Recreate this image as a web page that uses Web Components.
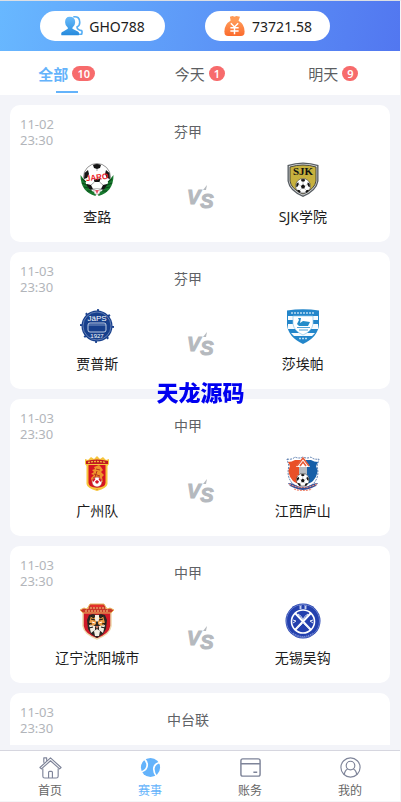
<!DOCTYPE html>
<html lang="zh-CN">
<head>
<meta charset="utf-8">
<meta name="viewport" content="width=device-width, initial-scale=1">
<title>赛事</title>
<style>
    body {
        margin: 0;
        background: #fff;
        font-family: "Noto Sans", "Noto Sans CJK SC", sans-serif;
        font-size: 14px;
        color: #1c1c1c;
    }
</style>
</head>
<body>
<match-app></match-app>

<script>
const ballPath = `
    <path d="M18 12l4 3-1.500 5h-5L14 15z" fill="#151515"/>
    <path d="M14 3q4-2 8 0l-1 3-3 1-3-1zM5.500 11l3.500-3 1 4-2 4-3 1zM30.500 11L27 8l-1 4 2 4 3 1zM8 22l4 1 2 4-3 1q-3-2-4-5zM28 22l-4 1-2 4 3 1q3-2 4-5z" fill="#151515"/>
    <path d="M18 7v5M14 15l-4-3M22 15l4-3M15.500 20L12 23M20.500 20l3.500 3M14 27h8" stroke="#777" stroke-width=".7" fill="none"/>
`;

// Club crests, all drawn on a 36x36 grid
const crests = {
    jaro: `
        <circle cx="18" cy="15" r="13.500" fill="#fff" stroke="#777" stroke-width=".8"/>
        ${ballPath}
        <path d="M10 10q8-1 16-2v8q-8 0-16 3z" fill="#fff"/>
        <path d="M1.500 13q0 17 15 21l1-3Q8 28 6 19zM34.500 13q0 17-15 21l-1-3q9-3 11-12z" fill="#187a2e"/>
        <path d="M3 17l4 3M3 21l5 2M5 25l5 1M8 29l5 0M33 17l-4 3M33 21l-5 2M31 25l-5 1M28 29l-5 0" fill="none" stroke="#0b4a1b" stroke-width="1.200"/>
        <circle cx="18" cy="29.500" r="3" fill="#fff" stroke="#999" stroke-width=".5"/>
        <path d="M16 28h4l-2 4z" fill="#e5566c"/>
        <text x="18" y="18" font-size="8" font-weight="900" fill="#ec1f2c" transform="rotate(-7 18 15)">JARO</text>`,
    sjk: `
        <path d="M2.500 3Q18-2 33.500 3v16Q32 29 18 35 4 29 2.500 19z" fill="#555b60"/>
        <path d="M3.800 4Q18-.500 32.200 4v15Q31 28 18 33.500 5 28 3.800 19z" fill="#d9dadb"/>
        <path d="M5 5Q18 1 31 5v14q-1 8-13 13Q6 27 5 19z" fill="#c7b13e" stroke="#3b3c36" stroke-width=".9"/>
        <text class="serif" x="18" y="13" font-size="11" font-weight="700" fill="#111">SJK</text>
        <g transform="translate(8.500 16) scale(.53)">
            <circle cx="18" cy="15" r="14" fill="#fff" stroke="#333"/>
            ${ballPath}
        </g>`,
    japs: `
        <circle cx="18" cy="17" r="16" fill="none" stroke="#1b428f" stroke-width="2" stroke-dasharray="2 10.500"/>
        <circle cx="18" cy="17" r="15.500" fill="#173f8c"/>
        <circle cx="18" cy="17" r="14" fill="none" stroke="#8299c6" stroke-width=".7"/>
        <rect x="9" y="14" width="18" height="9" rx="2" fill="#173f8c" stroke="#e7edf8" stroke-width=".8"/>
        <path d="M9 16h18" stroke="#a9bbdd" stroke-width=".7"/>
        <text x="18" y="12" font-size="8" fill="#fff">JäPS</text>
        <text x="18" y="29" font-size="6" fill="#fff">1927</text>`,
    salpa: `
        <path d="M2 1.500Q18-1 34 1.500v14Q33 28 18 35 3 28 2 15.500z" fill="#2386ca"/>
        <path d="M3 7h30v4H3zM3 15h30v5H3zM6 24h24l-3 3H9z" fill="#f7fbfe"/>
        <path d="M8 7h20v8q-1 7-10 11Q9 22 8 15z" fill="#fff" stroke="#8bc5e9" stroke-width=".7"/>
        <path d="M13 9h3l-1 5 3-2 7 1-2 4h-9l-2-2 2-4z" fill="#238cc9"/>
        <path d="M12 18.500h13M14 21h9" stroke="#52a4d7"/>
        <path d="M6 4h24" stroke="#b9dcf2" stroke-width="1.500" stroke-dasharray="2 1"/>
        <path d="M14 29.500h8" stroke="#b9dcf2" stroke-width="1.500" stroke-dasharray="2 1"/>`,
    guangzhou: `
        <path d="M6 3l3 1 3-3 3 2 3-3 3 3 3-2 3 3 3-1v5l-1.500 2v18Q28 32 18 35 8 32 7.500 28V10L6 8z" fill="#f6c43b"/>
        <path d="M9.500 9h17v18q-.500 4-8.500 6.500Q10 31 9.500 27z" fill="#d51322"/>
        <path d="M7 5q11-3 22 0v3H7z" fill="#bf1820"/>
        <path d="M9 6.500q9-2 18 0" stroke="#f3bd3a" stroke-width="1.300" stroke-dasharray="2 1" fill="none"/>
        <path d="M20 9l2 2 2 3-2 2 3 3-2 2 1 5-11 1-1-5 3-3-3-1 3-2-2-2 3-1-1-2z" fill="#ef952c"/>
        <path d="M17 13l4 1M15 18l6 2M14 22l7-1M18 15l-2 6" stroke="#b5341c" stroke-width="1"/>
        <circle cx="18" cy="26" r="5" fill="#fff" stroke="#a7261f" stroke-width=".6"/>
        <path d="M18 24l2 1.500-1 2h-2l-1-2zM13.500 24l2-2 1 1-2 3zM22.500 24l-2-2-1 1 2 3z" fill="#d51322"/>
        <path d="M11 31q7 3 14 0" stroke="#f6c43b" stroke-width="1.500" fill="none"/>`,
    jiangxi: `
        <path d="M2 3q5 1 8-2 4 2 8 0 4 2 8 0 3 3 8 2l-2 7q3 11-4 18-5 3-10 5-5-2-10-5Q1 21 4 10z" fill="#fff" stroke="#315c9b" stroke-width=".8" stroke-dasharray="2 1"/>
        <path d="M3 6q4 0 7-2l7 0v24q-6 0-9-3-7-8-3-15z" fill="#e95028"/>
        <path d="M33 6q-4 0-7-2l-7 0v24q6 0 9-3 7-8 3-15z" fill="#165fa8"/>
        <path d="M18 1l7 10h-3v10h-8V11h-3z" fill="#fff"/>
        <path d="M14 11h8v12h-8z" fill="#b7bbc0"/>
        <path d="M12 10l6-8 6 8M15 10l3-4 3 4" fill="none" stroke="#e65a37" stroke-width="1.500"/>
        <g transform="translate(9.500 17) scale(.46)">
            <circle cx="18" cy="15" r="14" fill="#fff" stroke="#222"/>
            ${ballPath}
        </g>
        <path d="M3 27q5 0 7 2 8 4 16 0 3-2 7-2l-2 3q-8 4-13 4-5 0-13-4z" fill="#314f9a"/>
        <path d="M4 28q14 7 28 0M9 33q9 3 18 0" fill="none" stroke="#f08d77" stroke-width="1.200" stroke-dasharray="2 1"/>`,
    liaoning: `
        <path d="M4 8h28v15q-1 8-14 13Q5 31 4 23z" fill="#cf1928" stroke="#edd8ac" stroke-width="1.500"/>
        <path d="M1 7l4-2 3 1 3-5h14l3 5 3-1 4 2-3 3H4z" fill="#c9382a" stroke="#e9b760"/>
        <path d="M8 5h20M6 8h24" stroke="#f5cb80" stroke-dasharray="2 1"/>
        <path d="M12 2h12v2H12z" fill="#e62d2a"/>
        <path d="M10 12l4-1 4 1 4-1 4 1 2 5-1 9-3 5-6 4-6-4-3-5-1-9z" fill="#292723"/>
        <path d="M12 13l5 2v6l-4 3-3-4zM24 13l-5 2v6l4 3 3-4z" fill="#ec9d46"/>
        <path d="M16 12h4v5l-2 2-2-2zM10 22l6 1v4l-4 3zM26 22l-6 1v4l4 3zM15 28l3-2 3 2-1 5h-4z" fill="#f3eee2"/>
        <path d="M12 16l4 1M24 16l-4 1M9 20l4 1M27 20l-4 1M10 25l4-1M26 25l-4-1M12 13l3 2M24 13l-3 2" stroke="#171717" stroke-width="1.200"/>
        <path d="M13 19l3 1M23 19l-3 1" stroke="#fff"/>
        <path d="M16 23h4l-2 3z" fill="#c67b64"/>`,
    wuxi: `
        <circle cx="18" cy="18" r="17.500" fill="#2340ae"/>
        <circle cx="18" cy="18" r="16.500" fill="none" stroke="#8c9edb" stroke-width=".6"/>
        <circle cx="18" cy="18.500" r="11.500" fill="#2340ae" stroke="#fff" stroke-width="1.600"/>
        <path d="M10 10l16 17M26 10L10 27" stroke="#fff" stroke-width="2"/>
        <path d="M13 11q4 2 5 6 1-4 5-6M12 25q5-3 6-6 1 3 6 6M8 17l3 1-3 2M28 17l-3 1 3 2" fill="none" stroke="#e3e9f8"/>
        <path d="M14 3h3M14 5h3M15.500 3v3M19 3h3M19 5h3M20.500 3v3" stroke="#dce3f6" stroke-width=".8" fill="none"/>
        <path d="M8 30q10 7 20 0" stroke="#a9b8e6" stroke-dasharray="1 1" fill="none"/>`
};

const navIcons = {
    home: `
        <path d="M5 7V2h3v3M1 12L12 2l11 10-1.500 1.500L12 5l-9.500 8.500z"/>
        <path d="M4 13v8q0 2 2 2h12q2 0 2-2v-8M10 23v-6q0-1 1-1h2q1 0 1 1v6"/>`,
    ball: `
        <circle cx="12" cy="12" r="10" fill="currentColor" stroke="none"/>
        <path d="M5 2.500Q10 7 8 12 6.500 16 1.500 16.500M22.500 6.500q-6 1-7 6-.500 5 3 9" stroke="#fff" stroke-width="1.800"/>`,
    card: `
        <rect x="2" y="3" width="20" height="18" rx="2" stroke-width="1.500"/>
        <path d="M2 8h20M15 17h4" stroke-width="1.500"/>`,
    user: `
        <circle cx="12" cy="12" r="10"/>
        <circle cx="12" cy="10" r="4.500"/>
        <path d="M5.500 19.500Q6 15 9 13.500M18.500 19.500Q18 15 15 13.500"/>`
};

const pillIcons = {
    user: `
        <path d="M14 2q7-1 7 6 0 4-3 5 0 3 5 4 1 1 0 4h-4" fill="none" stroke="#55aef4" stroke-width="1.800"/>
        <path d="M10 2q6 0 6 6 0 4-3 6v1l6 3q2 1 1 4H1q-1-3 2-4l5-3v-1q-3-2-3-6 0-6 5-6z" fill="url(#blue)"/>`,
    money: `
        <path d="M7 2l3-1 2 1 2-1 4 1-2 5H8z" fill="#ff9a55"/>
        <path d="M8 6h8q7 4 7 12 0 5-4 5H5q-4 0-4-5Q1 10 8 6z" fill="url(#orange)"/>
        <path d="M8 9l4 4 4-4M12 13v8M7.500 14h9M7.500 17.500h9" fill="none" stroke="#fff" stroke-width="1.600"/>`
};

const matches = [
    { day: '11-02', time: '23:30', league: '芬甲', teams: [['jaro', '查路'], ['sjk', 'SJK学院']] },
    { day: '11-03', time: '23:30', league: '芬甲', teams: [['japs', '贾普斯'], ['salpa', '莎埃帕']] },
    { day: '11-03', time: '23:30', league: '中甲', teams: [['guangzhou', '广州队'], ['jiangxi', '江西庐山']] },
    { day: '11-03', time: '23:30', league: '中甲', teams: [['liaoning', '辽宁沈阳城市'], ['wuxi', '无锡吴钩']] },
    { day: '11-03', time: '23:30', league: '中台联', teams: [] }
];

function render(host, html) {
    host.attachShadow({ mode: 'open' }).innerHTML = html;
}


class InfoPill extends HTMLElement {
    connectedCallback() {
        render(this, `
            <style>
                :host {
                    display: flex;
                    align-items: center;
                    justify-content: center;
                    gap: 6px;
                    width: 125px;
                    height: 30px;
                    border-radius: 15px;
                    background: #fff;
                }
                svg {
                    width: 23px;
                    height: 22px;
                }
            </style>
            <svg viewBox="0 0 24 24" aria-hidden="true">
                <defs>
                    <linearGradient id="blue" x2="0" y2="1"><stop stop-color="#69bbfb"/><stop offset="1" stop-color="#278bdd"/></linearGradient>
                    <linearGradient id="orange" x2="0" y2="1"><stop stop-color="#ff9b59"/><stop offset="1" stop-color="#fb6a2c"/></linearGradient>
                </defs>
                ${pillIcons[this.getAttribute('icon')]}
            </svg>
            <slot></slot>
        `);
    }
}

class DayTab extends HTMLElement {
    connectedCallback() {
        render(this, `
            <style>
                :host {
                    display: block;
                    flex: 1;
                }
                button {
                    display: grid;
                    grid-template-rows: 40px 2px;
                    justify-items: center;
                    align-items: center;
                    width: 100%;
                    height: 44px;
                    padding: 0;
                    border: 0;
                    background: none;
                    font: inherit;
                    font-size: 15px;
                    color: #5c5e62;
                    cursor: pointer;
                }
                .label {
                    display: flex;
                    align-items: center;
                    gap: 4px;
                    padding-top: 4px;
                }
                .badge {
                    padding: 0 5px;
                    border-radius: 8px;
                    background: #f76b6c;
                    color: #fff;
                    font-size: 11px;
                    font-weight: 600;
                    line-height: 15px;
                }
                :host([active]) button {
                    color: #64b3fb;
                    font-weight: 700;
                }
                :host([active]) button::after {
                    content: "";
                    width: 22px;
                    height: 2px;
                    background: #64b3fb;
                }
            </style>
            <button type="button">
                <span class="label"><slot></slot><span class="badge">${this.getAttribute('count')}</span></span>
            </button>
        `);
    }
}

class TeamCrest extends HTMLElement {
    connectedCallback() {
        render(this, `
            <style>
                :host {
                    display: flex;
                    flex-direction: column;
                    align-items: center;
                    gap: 9px;
                    line-height: 20px;
                }
                svg {
                    width: 36px;
                    height: 36px;
                    overflow: visible;
                }
                text {
                    font-family: "Liberation Sans", sans-serif;
                    text-anchor: middle;
                }
                .serif {
                    font-family: "Liberation Serif", serif;
                }
            </style>
            <svg viewBox="0 0 36 36" aria-hidden="true">${crests[this.getAttribute('crest')]}</svg>
            <slot></slot>
        `);
    }
}

class MatchCard extends HTMLElement {
    set match(match) {
        const [home, away] = match.teams.map(([crest, name]) => `<team-crest crest="${crest}">${name}</team-crest>`);

        render(this, `
            <style>
                :host {
                    display: block;
                    flex: none;
                    min-height: 137px;
                    box-sizing: border-box;
                    padding: 11px 10px 15px;
                    border-radius: 10px;
                    background: #fff;
                }
                .head {
                    display: grid;
                    grid-template-columns: 3fr 8fr 4fr;
                    align-items: center;
                }
                time {
                    font-size: 13px;
                    line-height: 16px;
                    color: #b2b5ba;
                }
                .league {
                    text-align: center;
                    line-height: 20px;
                    color: #606266;
                }
                .teams {
                    display: grid;
                    grid-template-columns: 3fr 1fr 3fr;
                    margin-top: 14px;
                }
                .versus {
                    justify-self: center;
                    width: 30px;
                    height: 30px;
                    margin-top: 20px;
                    overflow: visible;
                    fill: #b5b9be;
                    stroke: #b5b9be;
                    font: italic 900 20px "Liberation Sans", sans-serif;
                }
            </style>
            <div class="head">
                <time>${match.day}<br>${match.time}</time>
                <span class="league">${match.league}</span>
            </div>
            ${home ? `
            <div class="teams">
                ${home}
                <svg class="versus" viewBox="0 0 30 30">
                    <text x="2" y="22">V<tspan dy="4">S</tspan></text>
                    <path d="M18 8l4-5-1 5z" stroke="none"/>
                </svg>
                ${away}
            </div>` : ''}
        `);
    }
}

class NavItem extends HTMLElement {
    connectedCallback() {
        render(this, `
            <style>
                :host {
                    display: block;
                    flex: 1;
                }
                a {
                    display: flex;
                    flex-direction: column;
                    align-items: center;
                    gap: 4px;
                    padding: 5px 0 2px;
                    font-size: 12px;
                    line-height: 16px;
                    color: #666;
                    text-decoration: none;
                }
                svg {
                    width: 23px;
                    height: 23px;
                    fill: none;
                    stroke: #7e8499;
                    stroke-width: 1.2;
                    stroke-linejoin: round;
                }
                :host([active]) a {
                    color: #64b3fb;
                }
            </style>
            <a href="#${this.getAttribute('icon')}">
                <svg viewBox="0 0 24 24" aria-hidden="true">${navIcons[this.getAttribute('icon')]}</svg>
                <slot></slot>
            </a>
        `);
    }
}

class MatchApp extends HTMLElement {
    connectedCallback() {
        render(this, `
            <style>
                :host {
                    display: flex;
                    flex-direction: column;
                    height: 100vh;
                    box-sizing: border-box;
                    border: solid #f5f5f7;
                    border-width: 1px 1px 1px 0;
                    border-top-color: #dcdfe4;
                    background: #f3f4f9;
                }
                header {
                    display: flex;
                    gap: 40px;
                    padding: 10px 10%;
                    background: linear-gradient(100deg, #68b8ff, #5277f0);
                }
                .tabs, nav {
                    display: flex;
                    background: #fff;
                }
                main {
                    display: flex;
                    flex-direction: column;
                    flex: 1;
                    gap: 10px;
                    min-height: 0;
                    margin-bottom: 5px;
                    padding: 10px 10px 0;
                    overflow-y: auto;
                    scrollbar-width: none;
                }
                nav {
                    border-top: 1px solid #d6d6df;
                }
                .watermark {
                    position: fixed;
                    top: 392px;
                    left: 50%;
                    transform: translate(-50%, -50%);
                    font-size: 22px;
                    font-weight: 900;
                    line-height: 24px;
                    white-space: nowrap;
                    color: #0000f0;
                    pointer-events: none;
                }
            </style>
            <header>
                <info-pill icon="user">GHO788</info-pill>
                <info-pill icon="money">73721.58</info-pill>
            </header>
            <div class="tabs">
                <day-tab count="10" active>全部</day-tab>
                <day-tab count="1">今天</day-tab>
                <day-tab count="9">明天</day-tab>
            </div>
            <main></main>
            <nav>
                <nav-item icon="home">首页</nav-item>
                <nav-item icon="ball" active>赛事</nav-item>
                <nav-item icon="card">账务</nav-item>
                <nav-item icon="user">我的</nav-item>
            </nav>
            <div class="watermark">天龙源码</div>
        `);

        const list = this.shadowRoot.querySelector('main');
        matches.forEach((match) => {
            const card = document.createElement('match-card');
            card.match = match;
            list.append(card);
        });
    }
}

window.customElements.define('info-pill', InfoPill);
window.customElements.define('day-tab', DayTab);
window.customElements.define('team-crest', TeamCrest);
window.customElements.define('match-card', MatchCard);
window.customElements.define('nav-item', NavItem);
window.customElements.define('match-app', MatchApp);
</script>
</body>
</html>
